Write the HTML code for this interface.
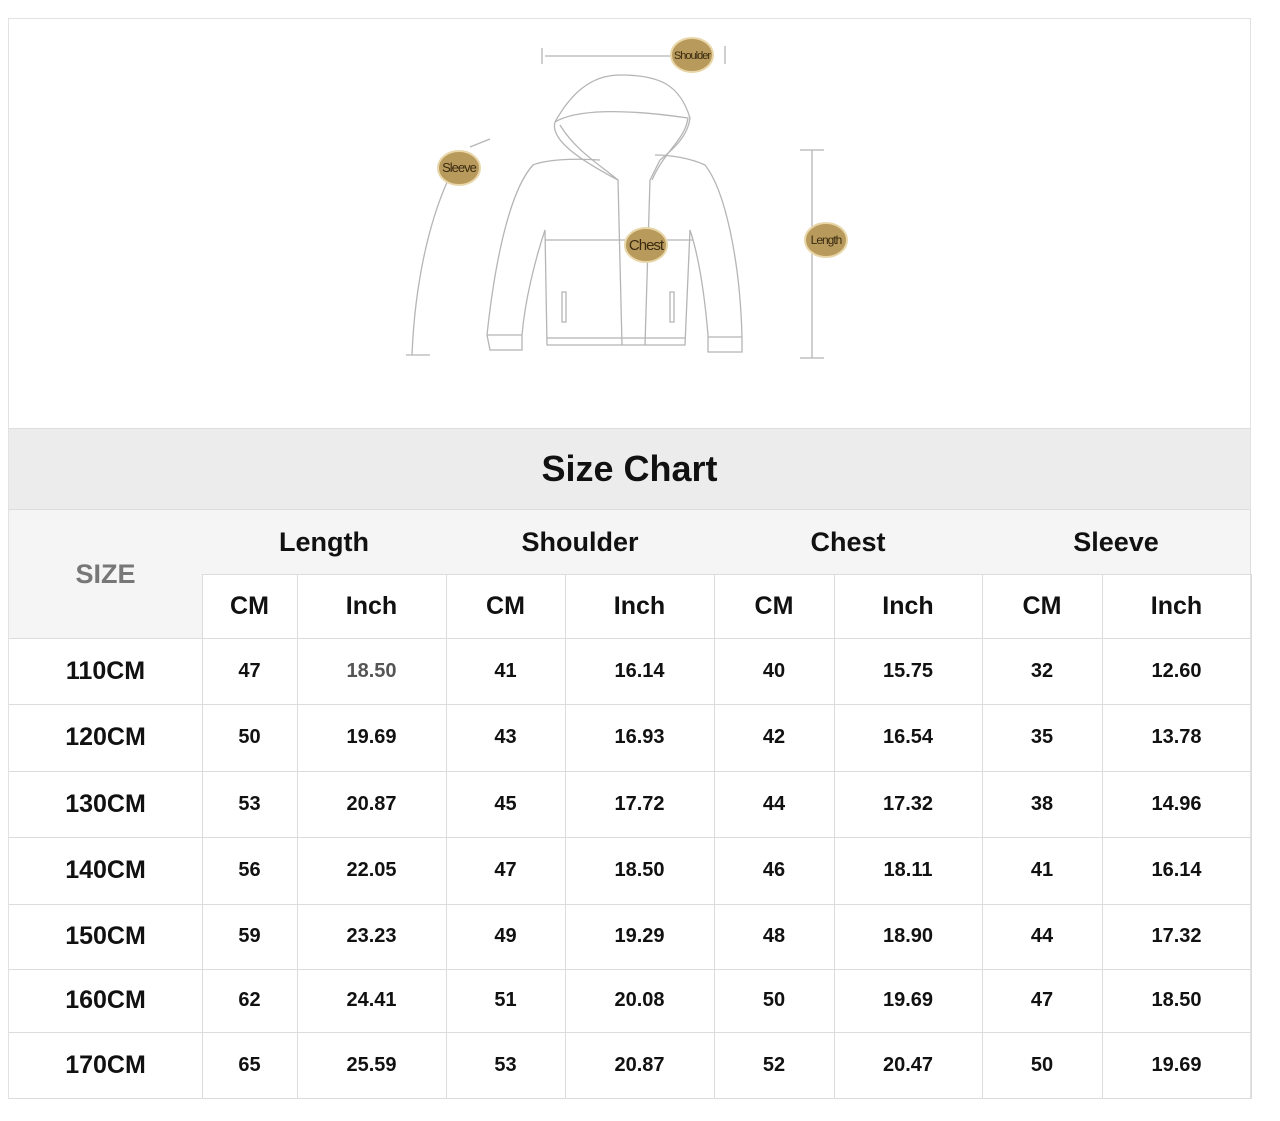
<!DOCTYPE html>
<html><head><meta charset="utf-8"><style>
*{margin:0;padding:0;box-sizing:border-box}
body{width:1280px;height:1121px;background:#fff;position:relative;font-family:"Liberation Sans","DejaVu Sans",sans-serif;overflow:hidden}
.box{position:absolute;left:8px;top:18px;width:1243px;height:1081px;border:1px solid #e2e2e2}
.c{position:absolute;display:flex;align-items:center;justify-content:center;font-weight:bold;color:#111;border-right:1px solid #dcdcdc;border-bottom:1px solid #dcdcdc}
.h{background:#f5f5f5;font-size:27px}
.s{font-size:25px}
.n{font-size:20px}
</style></head><body>
<div class="box"></div>
<svg style="position:absolute;left:0;top:0" width="1280" height="430" fill="none" stroke="#b5b5b5" stroke-width="1.3">
<path d="M542 48v16M545 56h130M725 46v18"/>
<path d="M555 122 C570 95 590 75 620 75 C660 75 680 85 690 118 C688 135 675 148 660 160 L650 180 L645 345"/>
<path d="M555 122 C575 110 620 108 688 118 C685 140 665 150 652 180"/>
<path d="M560 125 C575 150 600 165 618 180 L622 345"/>
<path d="M555 122 C550 140 580 160 618 180"/>
<path d="M600 160 C570 158 545 160 533 165 C510 190 495 260 487 335 L490 350 L522 350 L522 335 C525 300 535 260 545 230 L547 345 L685 345 L690 230 C700 260 705 300 708 335 L708 352 L742 352 L742 337 C740 260 725 190 705 165 C690 158 670 155 655 155"/>
<path d="M487 335h35M708 337h34M547 338h138M545 240h148"/>
<path d="M562 292v30h4v-30zM670 292v30h4v-30z"/>
<path d="M800 150h24M812 150v208M800 358h24"/>
<path d="M448 180 C430 220 415 280 412 355M406 355h24M470 147l20-8"/>
</svg>
<svg style="position:absolute;left:0;top:0" width="1280" height="430">
<g fill="#b89a5c" stroke="#e8d6a8" stroke-width="2">
<ellipse cx="692" cy="55" rx="21" ry="17"/><ellipse cx="459" cy="168" rx="21" ry="17"/>
<ellipse cx="646" cy="245" rx="21" ry="17"/><ellipse cx="826" cy="240" rx="21" ry="17"/></g>
<g font-family="Liberation Sans,sans-serif" font-size="13" fill="#3a2a10" text-anchor="middle" letter-spacing="-1">
<text x="692" y="59" font-size="11">Shoulder</text><text x="459" y="172">Sleeve</text>
<text x="646" y="250" font-size="15">Chest</text><text x="826" y="244" font-size="12">Length</text></g>
</svg>
<div style="position:absolute;left:9px;top:428px;width:1241px;height:82px;background:#ececec;border-top:1px solid #ddd;border-bottom:1px solid #ddd;display:flex;align-items:center;justify-content:center;font-size:36px;font-weight:bold;color:#111">Size Chart</div>
<div class="c h" style="left:9px;top:510px;width:194px;height:129px;color:#777">SIZE</div>
<div class="c h" style="left:202px;top:510px;width:245px;height:65px">Length</div>
<div class="c h" style="left:446px;top:510px;width:269px;height:65px">Shoulder</div>
<div class="c h" style="left:714px;top:510px;width:269px;height:65px">Chest</div>
<div class="c h" style="left:982px;top:510px;width:269px;height:65px">Sleeve</div>
<div id="t"></div>
<script>
var xs=[9,202,297,446,565,714,834,982,1102,1251];
var ys=[574,638,704,771,837,904,969,1032,1098];
var d=[["110CM",47,"18.50",41,"16.14",40,"15.75",32,"12.60"],["120CM",50,"19.69",43,"16.93",42,"16.54",35,"13.78"],["130CM",53,"20.87",45,"17.72",44,"17.32",38,"14.96"],["140CM",56,"22.05",47,"18.50",46,"18.11",41,"16.14"],["150CM",59,"23.23",49,"19.29",48,"18.90",44,"17.32"],["160CM",62,"24.41",51,"20.08",50,"19.69",47,"18.50"],["170CM",65,"25.59",53,"20.87",52,"20.47",50,"19.69"]];
var h="";
for(var i=1;i<9;i++){h+='<div class="c s" style="left:'+xs[i]+'px;top:574px;width:'+(xs[i+1]-xs[i]+1)+'px;height:65px">'+(i%2?"CM":"Inch")+'</div>';}
for(var r=0;r<7;r++){for(var i=0;i<9;i++){h+='<div class="c '+(i?"n":"s")+'" style="left:'+xs[i]+'px;top:'+ys[r+1]+'px;width:'+(xs[i+1]-xs[i]+1)+'px;height:'+(ys[r+2]-ys[r+1]+1)+'px'+(r==0&&i==2?';color:#555':'')+'">'+d[r][i]+'</div>';}}
document.getElementById("t").innerHTML=h;
</script>
</body></html>
